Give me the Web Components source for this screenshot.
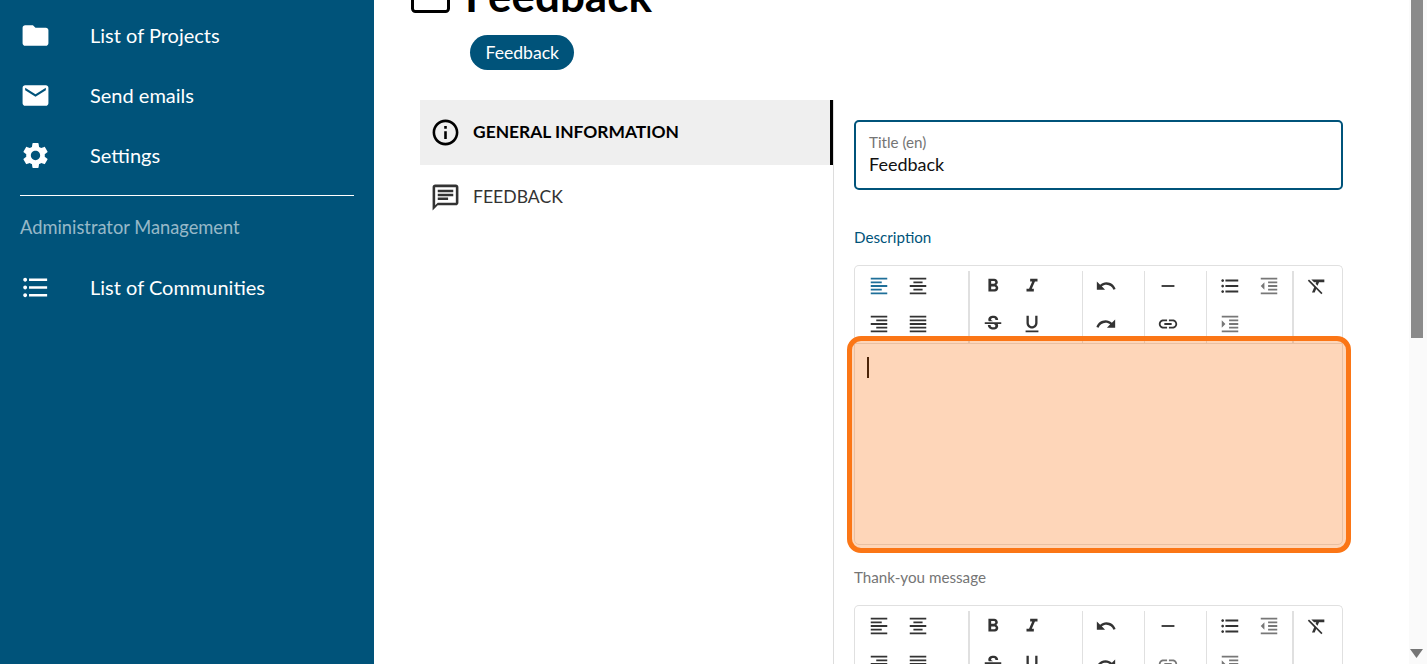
<!DOCTYPE html>
<html lang="en">
<head>
<meta charset="utf-8">
<title>Feedback</title>
<style>
  html, body { margin: 0; height: 100%; overflow: hidden; }
  body { display: flex; font-family: Lato, "Liberation Sans", sans-serif; background: #fff; }
</style>
</head>
<body>
<side-nav>
  <nav-item icon="folder">List of Projects</nav-item>
  <nav-item icon="email">Send emails</nav-item>
  <nav-item icon="settings">Settings</nav-item>
  <nav-section>Administrator Management</nav-section>
  <nav-item icon="list">List of Communities</nav-item>
</side-nav>
<main-panel>
  <page-heading>Feedback</page-heading>
  <tag-chip>Feedback</tag-chip>
  <form-layout>
    <tab-item slot="tabs" icon="info" active>GENERAL INFORMATION</tab-item>
    <tab-item slot="tabs" icon="chat">FEEDBACK</tab-item>
    <title-field label="Title (en)">Feedback</title-field>
    <rich-editor label="Description" focused highlighted></rich-editor>
    <rich-editor label="Thank-you message" link-disabled></rich-editor>
  </form-layout>
</main-panel>
<scroll-rail></scroll-rail>

<script>
// material icon paths
const ICONS = {
  folder: 'M10 4H4c-1.1 0-1.99.9-1.99 2L2 18c0 1.1.9 2 2 2h16c1.1 0 2-.9 2-2V8c0-1.1-.9-2-2-2h-8l-2-2z',
  email: 'M20 4H4c-1.1 0-1.99.9-1.99 2L2 18c0 1.1.9 2 2 2h16c1.1 0 2-.9 2-2V6c0-1.1-.9-2-2-2zm0 4l-8 5-8-5V6l8 5 8-5v2z',
  settings: 'M19.14 12.94c.04-.3.06-.61.06-.94 0-.32-.02-.64-.07-.94l2.03-1.58c.18-.14.23-.41.12-.61l-1.92-3.32c-.12-.22-.37-.29-.59-.22l-2.39.96c-.5-.38-1.03-.7-1.62-.94l-.36-2.54c-.04-.24-.24-.41-.48-.41h-3.84c-.24 0-.43.17-.47.41l-.36 2.54c-.59.24-1.13.57-1.62.94l-2.39-.96c-.22-.08-.47 0-.59.22L2.74 8.87c-.12.21-.08.47.12.61l2.03 1.58c-.05.3-.09.63-.09.94s.02.64.07.94l-2.03 1.58c-.18.14-.23.41-.12.61l1.92 3.32c.12.22.37.29.59.22l2.39-.96c.5.38 1.03.7 1.62.94l.36 2.54c.05.24.24.41.48.41h3.84c.24 0 .44-.17.47-.41l.36-2.54c.59-.24 1.13-.56 1.62-.94l2.39.96c.22.08.47 0 .59-.22l1.92-3.32c.12-.22.07-.47-.12-.61l-2.01-1.58zM12 15.6c-1.98 0-3.6-1.62-3.6-3.6s1.62-3.6 3.6-3.6 3.6 1.62 3.6 3.6-1.62 3.6-3.6 3.6z',
  list: 'M4 10.5c-.83 0-1.5.67-1.5 1.5s.67 1.5 1.5 1.5 1.5-.67 1.5-1.5-.67-1.5-1.5-1.5zm0-6c-.83 0-1.5.67-1.5 1.5S3.17 7.5 4 7.5 5.5 6.83 5.5 6 4.83 4.5 4 4.5zm0 12c-.83 0-1.5.68-1.5 1.5s.68 1.5 1.5 1.5 1.5-.68 1.5-1.5-.67-1.5-1.5-1.5zM7 19h14v-2H7v2zm0-6h14v-2H7v2zm0-8v2h14V5H7z',
  info: 'M11 7h2v2h-2zm0 4h2v6h-2zm1-9C6.48 2 2 6.48 2 12s4.48 10 10 10 10-4.48 10-10S17.52 2 12 2zm0 18c-4.41 0-8-3.59-8-8s3.59-8 8-8 8 3.59 8 8-3.59 8-8 8z',
  chat: 'M20 2H4c-1.1 0-2 .9-2 2v18l4-4h14c1.1 0 2-.9 2-2V4c0-1.1-.9-2-2-2zm0 14H6l-2 2V4h16v12zM6 12h8v2H6zm0-3h12v2H6zm0-3h12v2H6z',
  alignLeft: 'M15 15H3v2h12v-2zm0-8H3v2h12V7zM3 13h18v-2H3v2zm0 8h18v-2H3v2zM3 3v2h18V3H3z',
  alignCenter: 'M7 15v2h10v-2H7zm-4 6h18v-2H3v2zm0-8h18v-2H3v2zm4-6v2h10V7H7zM3 3v2h18V3H3z',
  alignRight: 'M3 21h18v-2H3v2zm6-4h12v-2H9v2zm-6-4h18v-2H3v2zm6-4h12V7H9v2zM3 3v2h18V3H3z',
  alignJustify: 'M3 21h18v-2H3v2zm0-4h18v-2H3v2zm0-4h18v-2H3v2zm0-4h18V7H3v2zm0-6v2h18V3H3z',
  bold: 'M15.6 10.79c.97-.67 1.65-1.77 1.65-2.79 0-2.26-1.75-4-4-4H7v14h7.04c2.09 0 3.71-1.7 3.71-3.79 0-1.52-.86-2.82-2.15-3.42zM10 6.5h3c.83 0 1.5.67 1.5 1.5s-.67 1.5-1.5 1.5h-3v-3zm3.5 9H10v-3h3.5c.83 0 1.5.67 1.5 1.5s-.67 1.5-1.5 1.5z',
  italic: 'M10 4v3h2.21l-3.42 8H6v3h8v-3h-2.21l3.42-8H18V4z',
  strike: 'M7.24 8.75c-.26-.48-.39-1.03-.39-1.67 0-.61.13-1.16.4-1.67.26-.5.63-.93 1.11-1.29.48-.35 1.05-.63 1.7-.83.66-.19 1.39-.29 2.18-.29.81 0 1.54.11 2.21.34.66.22 1.23.54 1.69.94.47.4.83.88 1.08 1.43.25.55.38 1.15.38 1.81h-3.01c0-.31-.05-.59-.15-.85-.09-.27-.24-.49-.44-.68-.2-.19-.45-.33-.75-.44-.3-.1-.66-.16-1.06-.16-.39 0-.74.04-1.03.13-.29.09-.53.21-.72.36-.19.16-.34.34-.44.55-.1.21-.15.43-.15.66 0 .48.25.88.74 1.21.38.25.77.48 1.41.7H7.39c-.05-.08-.11-.17-.15-.25zM21 12v-2H3v2h9.62c.18.07.4.14.55.2.37.17.66.34.87.51.21.17.35.36.43.57.07.2.11.43.11.69 0 .23-.05.45-.14.66-.09.2-.23.38-.42.53-.19.15-.42.26-.71.35-.29.08-.63.13-1.01.13-.43 0-.83-.04-1.18-.13s-.66-.23-.91-.42c-.25-.19-.45-.44-.59-.75-.14-.31-.25-.76-.25-1.21H6.4c0 .55.08 1.13.24 1.58.16.45.37.85.65 1.21.28.35.6.66.98.92.37.26.78.48 1.22.65.44.17.9.3 1.38.39.48.08.96.13 1.44.13.8 0 1.53-.09 2.18-.28s1.21-.45 1.67-.79c.46-.34.82-.77 1.07-1.27s.38-1.07.38-1.71c0-.6-.1-1.14-.31-1.61-.05-.11-.11-.23-.17-.33H21z',
  underline: 'M12 17c3.31 0 6-2.69 6-6V3h-2.5v8c0 1.93-1.57 3.5-3.5 3.5S8.5 12.93 8.5 11V3H6v8c0 3.31 2.69 6 6 6zm-7 2v2h14v-2H5z',
  undo: 'M12.5 8c-2.65 0-5.05.99-6.9 2.6L2 7v9h9l-3.62-3.62c1.39-1.16 3.16-1.88 5.12-1.88 3.54 0 6.55 2.31 7.6 5.5l2.37-.78C21.08 11.03 17.15 8 12.5 8z',
  redo: 'M18.4 10.6C16.55 8.99 14.15 8 11.5 8c-4.65 0-8.58 3.03-9.96 7.22L3.9 16c1.05-3.19 4.05-5.5 7.6-5.5 1.95 0 3.73.72 5.12 1.88L13 16h9V7l-3.6 3.6z',
  rule: 'M19 13H5v-2h14v2z',
  link: 'M3.9 12c0-1.71 1.39-3.1 3.1-3.1h4V7H7c-2.76 0-5 2.24-5 5s2.24 5 5 5h4v-1.9H7c-1.71 0-3.1-1.39-3.1-3.1zM8 13h8v-2H8v2zm9-6h-4v1.9h4c1.71 0 3.1 1.39 3.1 3.1s-1.39 3.1-3.1 3.1h-4V17h4c2.76 0 5-2.24 5-5s-2.24-5-5-5z',
  outdent: 'M11 17h10v-2H11v2zm-8-5l4 4V8l-4 4zm0 9h18v-2H3v2zM3 3v2h18V3H3zm8 6h10V7H11v2zm0 4h10v-2H11v2z',
  indent: 'M3 21h18v-2H3v2zM3 8v8l4-4-4-4zm8 9h10v-2H11v2zM3 3v2h18V3H3zm8 6h10V7H11v2zm0 4h10v-2H11v2z',
  clear: 'M3.27 5L2 6.27l6.97 6.97L6.5 19h3l1.57-3.66L16.73 21 18 19.73 3.55 5.27 3.27 5zM6 5v.18L8.82 8h2.4l-.72 1.68 2.1 2.1L14.21 8H20V5H6z'
};

const BLUE = '#00537a';

function svgIcon(name, size) {
  return `<svg width="${size}" height="${size}" viewBox="0 0 24 24" fill="currentColor" aria-hidden="true"><path d="${ICONS[name]}"/></svg>`;
}

// small helper so each element only declares its styles and markup
function define(tag, render) {
  customElements.define(tag, class extends HTMLElement {
    connectedCallback() {
      if (this.shadowRoot) return;
      this.attachShadow({ mode: 'open' }).innerHTML = render(this);
    }
  });
}

define('side-nav', () => `
  <style>
    :host { display: block; flex: 0 0 374px; box-sizing: border-box; height: 100%; padding-top: 5px; background: ${BLUE}; color: #fff; }
  </style>
  <slot></slot>`);

define('nav-item', (el) => `
  <style>
    :host { display: flex; align-items: center; height: 60px; padding-left: 19.5px; font-size: 20px; }
    svg { flex: none; width: 31px; height: 31px; margin-right: 39.5px; }
  </style>
  ${svgIcon(el.getAttribute('icon'), 31)}<slot></slot>`);

define('nav-section', () => `
  <style>
    :host { display: block; margin: 10px 20px 0; border-top: 1px solid #fff; padding-top: 20px; height: 41px; font-size: 18.3px; line-height: 22px; color: rgba(255,255,255,.6); }
  </style>
  <slot></slot>`);

define('main-panel', () => `
  <style>
    :host { display: block; flex: 1; min-width: 0; height: 100%; overflow: hidden; }
  </style>
  <slot></slot>`);

define('page-heading', () => `
  <style>
    :host { display: flex; align-items: center; height: 54px; margin: -32px 0 0 37px; color: #000; }
    svg { flex: none; margin-right: 15px; }
    h1 { margin: 0; font-size: 44px; line-height: 54px; font-weight: 700; }
  </style>
  <svg width="39" height="36" viewBox="0 0 39 36"><rect x="1.5" y="1.5" width="36" height="33" rx="3" fill="none" stroke="currentColor" stroke-width="3"/></svg>
  <h1><slot></slot></h1>`);

define('tag-chip', () => `
  <style>
    :host { display: flex; align-items: center; box-sizing: border-box; width: 104px; height: 35px; margin: 13px 0 30px 96px; padding: 0 0 0 15.5px; border-radius: 18px; background: ${BLUE}; color: #fff; font-size: 17.6px; }
  </style>
  <slot></slot>`);

define('form-layout', () => `
  <style>
    :host { display: flex; height: 564px; }
    .tabs { flex: 0 0 413px; box-sizing: border-box; margin-left: 46px; }
    .fields { flex: none; width: 489px; padding: 20px 0 0 20px; border-left: 1px solid #ddd; }
  </style>
  <div class="tabs"><slot name="tabs"></slot></div>
  <div class="fields"><slot></slot></div>`);

define('tab-item', (el) => {
  const active = el.hasAttribute('active');
  return `
  <style>
    :host { display: flex; align-items: center; box-sizing: border-box; height: 65px; padding: 0 0 3px 10px; font-size: ${active ? '17.4px' : '17.6px'};
      color: ${active ? '#000' : '#333'}; font-weight: ${active ? 700 : 400};
      background: ${active ? '#efefef' : 'transparent'}; border-right: ${active ? '3px solid #000' : '0'}; }
    svg { flex: none; margin: 3px 12px 0 0; width: 31px; height: 31px; }
  </style>
  ${svgIcon(el.getAttribute('icon'), 31)}<slot></slot>`;
});

define('title-field', (el) => `
  <style>
    :host { display: flex; flex-direction: column; justify-content: center; box-sizing: border-box; height: 70px; padding: 0 13px; border: 2px solid ${BLUE}; border-radius: 5px; }
    .label { font-size: 15.2px; line-height: 19px; color: #757575; }
    .value { font-size: 18px; line-height: 24px; color: #111; margin-bottom: 1px; }
  </style>
  <div class="label">${el.getAttribute('label')}</div>
  <div class="value"><slot></slot></div>`);

// toolbar groups: width of the group, left inset, and the buttons in reading order
const TOOL_GROUPS = [
  { width: 115, inset: 5, sep: 2, tools: ['alignLeft', 'alignCenter', 'alignRight', 'alignJustify'] },
  { width: 113, inset: 4, sep: 1, tools: ['bold', 'italic', 'strike', 'underline'] },
  { width: 62, inset: 4, sep: 1, tools: ['undo', 'redo'], one: true },
  { width: 62, inset: 4, sep: 1, tools: ['rule', 'link'], one: true },
  { width: 87, inset: 4, sep: 2, tools: ['list', 'outdent', 'indent', ''] },
  { width: 48, inset: 4, sep: 0, tools: ['clear'], one: true }
];

define('rich-editor', (el) => {
  const focused = el.hasAttribute('focused');
  const linkOff = el.hasAttribute('link-disabled');
  const groups = TOOL_GROUPS.map((g) => {
    const buttons = g.tools.map((name) => {
      if (!name) return '<span></span>';
      const cls = [];
      if (name === 'alignLeft' && focused) cls.push('on');
      if (name === 'outdent' || name === 'indent' || (name === 'link' && linkOff)) cls.push('off');
      return `<button class="${cls.join(' ')}" title="${name}">${svgIcon(name, 22)}</button>`;
    }).join('');
    return `<div class="group${g.one ? ' one' : ''}" style="width:${g.width}px;padding-left:${g.inset}px;border-right-width:${g.sep}px">${buttons}</div>`;
  }).join('');
  return `
  <style>
    :host { display: block; font-size: 15.2px; }
    .label { height: 75px; line-height: 19px; padding-top: 38px; box-sizing: border-box; color: ${focused ? BLUE : '#757575'}; }
    :host(:not([focused])) .label { height: 60px; padding-top: 23px; }
    .toolbar { display: flex; box-sizing: border-box; height: 78px; border: 1px solid #e0e0e0; border-bottom: 0; border-radius: 5px 5px 0 0; }
    .group { display: grid; grid-template-columns: 39px 39px; grid-auto-rows: 38px; align-content: start; box-sizing: border-box; height: 72px; margin-top: 5px; border: 0 solid #e0e0e0; }
    .group.one { grid-template-columns: 39px; }
    button { all: unset; display: flex; align-items: center; justify-content: center; height: 38px; width: 38px; margin-top: -4.5px; color: #333; }
    .on { color: #1f6f99; }
    .off { color: #777; }
    .content { position: relative; box-sizing: border-box; height: 202px; border: 1px solid #e0e0e0; border-radius: 0 0 5px 5px; padding: 13px 12px; }
    .caret { width: 2px; height: 21px; background: #000; }
    .mark { position: absolute; top: -8px; left: -8px; right: -9px; bottom: -9px; border: 5px solid #fb7616; border-radius: 14px; background: rgba(251,118,22,.3); }
  </style>
  <div class="label">${el.getAttribute('label')}</div>
  <div class="toolbar">${groups}</div>
  <div class="content">
    ${focused ? '<div class="caret"></div>' : ''}
    ${el.hasAttribute('highlighted') ? '<div class="mark"></div>' : ''}
  </div>`;
});

define('scroll-rail', () => `
  <style>
    :host { display: flex; flex-direction: column; flex: 0 0 17px; box-sizing: border-box; height: 100%; padding: 0 4px 0 2px; background: #fafafa; }
    .thumb { height: 338px; background: #8a8a8a; }
    .gap { flex: 1; }
    svg { display: block; margin: 0 0 6px -1px; }
  </style>
  <div class="thumb"></div>
  <div class="gap"></div>
  <svg width="13" height="9" viewBox="0 0 13 9"><path d="M0 0h13L6.5 9z" fill="#757575"/></svg>`);
</script>
</body>
</html>
